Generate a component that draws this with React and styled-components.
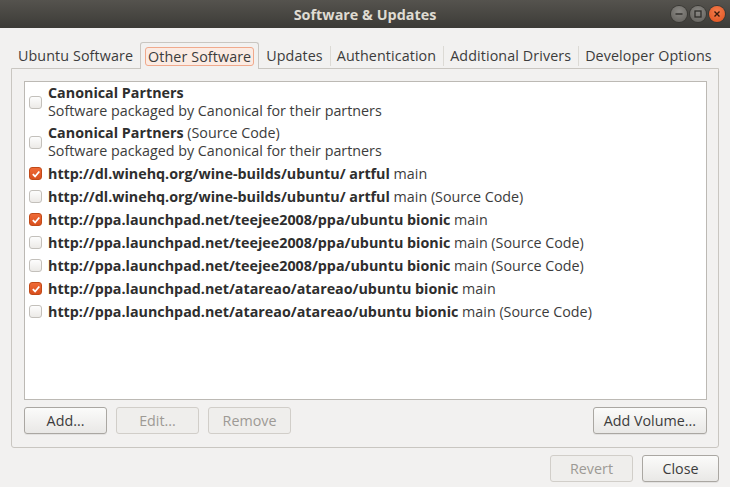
import styled, { createGlobalStyle } from 'styled-components';

const sources = [
    { checked: false, title: 'Canonical Partners', sub: 'Software packaged by Canonical for their partners' },
    { checked: false, title: 'Canonical Partners', extra: ' (Source Code)', sub: 'Software packaged by Canonical for their partners' },
    { checked: true, title: 'http://dl.winehq.org/wine-builds/ubuntu/ artful', extra: ' main' },
    { checked: false, title: 'http://dl.winehq.org/wine-builds/ubuntu/ artful', extra: ' main (Source Code)' },
    { checked: true, title: 'http://ppa.launchpad.net/teejee2008/ppa/ubuntu bionic', extra: ' main' },
    { checked: false, title: 'http://ppa.launchpad.net/teejee2008/ppa/ubuntu bionic', extra: ' main (Source Code)' },
    { checked: false, title: 'http://ppa.launchpad.net/teejee2008/ppa/ubuntu bionic', extra: ' main (Source Code)' },
    { checked: true, title: 'http://ppa.launchpad.net/atareao/atareao/ubuntu bionic', extra: ' main' },
    { checked: false, title: 'http://ppa.launchpad.net/atareao/atareao/ubuntu bionic', extra: ' main (Source Code)' },
];

const tabs = ['Ubuntu Software', 'Other Software', 'Updates', 'Authentication', 'Additional Drivers', 'Developer Options'];

function App() {
    return (
        <>
            <GlobalStyle />
            <Window>
                <TitleBar>
                    <Title>Software &amp; Updates</Title>
                    <WinButtons>
                        <WinBtn>
                            <svg width="8" height="8" viewBox="0 0 8 8"><path d="M0.5 4h7" stroke="#2e2d2a" strokeWidth="1.4" /></svg>
                        </WinBtn>
                        <WinBtn>
                            <svg width="8" height="8" viewBox="0 0 8 8"><rect x="1" y="1" width="6" height="6" fill="none" stroke="#2e2d2a" strokeWidth="1.3" /></svg>
                        </WinBtn>
                        <WinBtn $close>
                            <svg width="8" height="8" viewBox="0 0 8 8"><path d="M1.5 1.5l5 5M6.5 1.5l-5 5" stroke="#3a1a0c" strokeWidth="1.4" /></svg>
                        </WinBtn>
                    </WinButtons>
                </TitleBar>
                <Body>
                    <TabBar>
                        {tabs.map((t, i) => (
                            <Tab key={t} $active={i === 1} $sep={i > 2}>
                                <TabLabel $active={i === 1}>{t}</TabLabel>
                            </Tab>
                        ))}
                    </TabBar>
                    <Frame>
                        <ListBox>
                            {sources.map((s, i) => (
                                <Row key={i} $tall={!!s.sub}>
                                    <Check $checked={s.checked}>
                                        {s.checked && (
                                            <svg width="10" height="10" viewBox="0 0 10 10">
                                                <path d="M1.8 5.2l2.3 2.3 4.2-5" fill="none" stroke="#fff" strokeWidth="1.8" />
                                            </svg>
                                        )}
                                    </Check>
                                    <RowText>
                                        <div>
                                            <b>{s.title}</b>
                                            {s.extra}
                                        </div>
                                        {s.sub && <div>{s.sub}</div>}
                                    </RowText>
                                </Row>
                            ))}
                        </ListBox>
                        <ButtonRow>
                            <Button>Add...</Button>
                            <Button disabled>Edit...</Button>
                            <Button disabled>Remove</Button>
                            <Spacer />
                            <Button $wide>Add Volume...</Button>
                        </ButtonRow>
                    </Frame>
                    <DialogButtons>
                        <Button disabled>Revert</Button>
                        <Button $close>Close</Button>
                    </DialogButtons>
                </Body>
            </Window>
        </>
    );
}

const GlobalStyle = createGlobalStyle`
    html, body {
        margin: 0;
        padding: 0;
        background: #f2f1f0;
    }
    body {
        font-family: 'Open Sans', 'Liberation Sans', sans-serif;
        font-size: 14.3px;
        color: #3c3c3c;
    }
`;

const Window = styled.div`
    width: 730px;
    height: 487px;
    display: flex;
    flex-direction: column;
    background: #f2f1f0;
    overflow: hidden;
`;

const TitleBar = styled.div`
    height: 28px;
    flex-shrink: 0;
    position: relative;
    display: flex;
    align-items: center;
    justify-content: center;
    background: linear-gradient(#55534e, #3c3b37);
`;

const Title = styled.div`
    color: #dfdbd2;
    font-weight: bold;
    font-size: 14.4px;
`;

const WinButtons = styled.div`
    position: absolute;
    right: 5px;
    top: 6px;
    display: flex;
    gap: 3px;
`;

const WinBtn = styled.div`
    width: 16px;
    height: 16px;
    border-radius: 50%;
    display: flex;
    align-items: center;
    justify-content: center;
    background: ${(p) =>
        p.$close
            ? 'radial-gradient(circle at 50% 35%, #f47d4d, #e0501c)'
            : 'radial-gradient(circle at 50% 35%, #8a8884, #605e59)'};
    box-shadow: 0 0 0 1px #3a3935;
`;

const Body = styled.div`
    flex: 1;
    display: flex;
    flex-direction: column;
    padding: 13px 11px 0 11px;
`;

const TabBar = styled.div`
    display: flex;
    align-items: flex-end;
    height: 27px;
    position: relative;
    z-index: 1;
    white-space: nowrap;
`;

const Tab = styled.div`
    height: ${(p) => (p.$active ? '27px' : '26px')};
    box-sizing: border-box;
    padding: 0 ${(p) => (p.$active ? '4px' : '7px')};
    display: flex;
    align-items: center;
    border: ${(p) => (p.$active ? '1px solid #c9c6c1' : 'none')};
    border-bottom: none;
    border-radius: 3px 3px 0 0;
    background: #f2f1f0;
    margin-bottom: ${(p) => (p.$active ? '-1px' : '0')};
    position: relative;
    &::before {
        content: '';
        display: ${(p) => (p.$sep ? 'block' : 'none')};
        position: absolute;
        left: 0;
        top: 4px;
        bottom: 2px;
        width: 1px;
        background: #dcdad5;
    }
`;

const TabLabel = styled.span`
    padding: 0 ${(p) => (p.$active ? '2px' : '0')};
    border-radius: 3px;
    border: ${(p) => (p.$active ? '1px solid #f0a98c' : 'none')};
    background: ${(p) => (p.$active ? '#fbebe3' : 'transparent')};
    line-height: 17px;
    letter-spacing: 0.1px;
`;

const Frame = styled.div`
    height: 380px;
    box-sizing: border-box;
    border: 1px solid #c9c6c1;
    border-radius: 0 0 3px 3px;
    padding: 12px 11px 13px 12px;
    display: flex;
    flex-direction: column;
`;

const ListBox = styled.div`
    height: 319px;
    box-sizing: border-box;
    background: #fff;
    border: 1px solid #bcb9b4;
`;

const Row = styled.div`
    display: flex;
    align-items: center;
    height: ${(p) => (p.$tall ? '40px' : '23px')};
    padding-left: 4px;
`;

const Check = styled.div`
    width: 13px;
    height: 13px;
    flex-shrink: 0;
    box-sizing: border-box;
    border-radius: 3px;
    margin-right: 6px;
    display: flex;
    align-items: center;
    justify-content: center;
    border: 1px solid ${(p) => (p.$checked ? '#c14a18' : '#c3c0bb')};
    background: ${(p) => (p.$checked ? 'linear-gradient(#ef6a36, #d9501e)' : 'linear-gradient(#fdfdfd, #eceae7)')};
`;

const RowText = styled.div`
    line-height: 18px;
    white-space: nowrap;
    b {
        font-weight: bold;
        color: #2e2e2e;
    }
`;

const ButtonRow = styled.div`
    display: flex;
    gap: 9px;
    margin-top: 7px;
`;

const Spacer = styled.div`
    flex: 1;
`;

const Button = styled.button`
    font: inherit;
    height: 27px;
    min-width: ${(p) => (p.$wide ? '114px' : '83px')};
    padding: 0 10px;
    border-radius: 3px;
    border: 1px solid ${(p) => (p.disabled ? '#d1cec9' : '#aaa7a2')};
    background: ${(p) => (p.disabled ? '#efeeec' : 'linear-gradient(#fbfbfa, #e9e8e6)')};
    color: ${(p) => (p.disabled ? '#9d9a95' : '#3c3c3c')};
    box-shadow: ${(p) => (p.disabled ? 'none' : '0 1px 0 rgba(0,0,0,0.06)')};
`;

const DialogButtons = styled.div`
    display: flex;
    justify-content: flex-end;
    gap: 9px;
    margin-top: 7px;
    & > button:last-child {
        min-width: 77px;
    }
`;

export default App;
